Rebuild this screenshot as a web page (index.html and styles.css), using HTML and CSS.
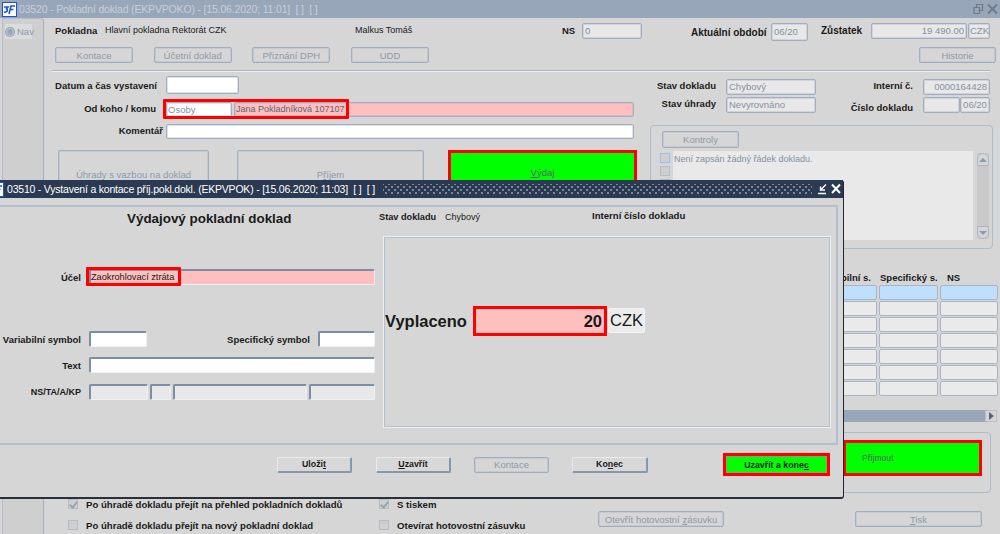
FILE: index.html
```html
<!DOCTYPE html>
<html lang="cs">
<head>
<meta charset="utf-8">
<title>Pokladní doklad</title>
<link rel="stylesheet" href="styles.css">
</head>
<body>
<div class="desktop">

  <section class="window">
    <header class="titlebar">
      <svg class="logo" viewBox="0 0 15 15"><rect x=".5" y=".5" width="14" height="14" fill="#fff" stroke="#1c50d8"/><path d="M7 12 9 4H13M8.2 7.5H11.5M2 5H6L4 7.5M2 10.5 5 9.5 5.5 7" fill="none" stroke="#1c50d8" stroke-width="1.6"/></svg>
      <span class="titletext">03520 - Pokladní doklad (EKPVPOKO) - [15.06.2020; 11:01]&nbsp; [ ]&nbsp; [ ]</span>
      <svg class="winbtns" viewBox="0 0 25 12"><path d="M1 4.5H6.5V10.5H1ZM3.5 4.5V1.5H9.5V7.5H6.5" fill="none" stroke="#6e7a8a" stroke-width="1.2"/><path d="M15 1.5 24 10.5M24 1.5 15 10.5" stroke="#6e7a8a" stroke-width="1.8"/></svg>
    </header>
    <div class="winbody">
      <nav class="nav"><div class="navtab"><span class="radio"></span><span>Nav</span></div></nav>
      <div class="canvas">

        <div class="headrow">
          <b class="pokladna">Pokladna</b>
          <span class="hlavni">Hlavní pokladna Rektorát CZK</span>
          <span class="malkus">Malkus Tomáš</span>
          <b class="nslabel">NS</b>
          <span class="field off nsfield">0</span>
          <b class="obdobilabel">Aktuální období</b>
          <span class="field off obdobi">06/20</span>
          <b class="zustateklabel">Zůstatek</b>
          <span class="field off zustatek">19 490.00</span>
          <span class="field off mena">CZK</span>
        </div>

        <div class="btnrow">
          <button class="btn off w78">Kontace</button>
          <button class="btn off w78">Účetní doklad</button>
          <button class="btn off w78">Přiznání DPH</button>
          <button class="btn off w78">UDD</button>
          <button class="btn off historie">Historie</button>
        </div>

        <div class="rule"></div>

        <div class="mainarea">
          <div class="leftcol">
            <div class="frow datumrow">
              <b class="lab labdatum">Datum a čas vystavení</b>
              <span class="field white datum"></span>
            </div>
            <div class="frow odkohorow">
              <b class="lab labodkoho">Od koho / komu</b>
              <span class="field white osoby">Osoby</span>
              <span class="field pink jana">Jana Pokladníková 107107</span>
              <span class="hl hlodkoho"></span>
            </div>
            <div class="frow komentarrow">
              <b class="lab labkomentar">Komentář</b>
              <span class="field white komentar"></span>
            </div>
            <div class="bigrow">
              <button class="btn off big uhrady">Úhrady s vazbou na doklad</button>
              <button class="btn off big prijem">P<u>ř</u>íjem</button>
              <button class="big vydaj"><u>V</u>ýdaj</button>
            </div>
          </div>

          <div class="rightcol">
            <div class="statrow statrow1">
              <b class="lab labstav">Stav dokladu</b>
              <span class="field off stav">Chybový</span>
              <b class="lab labinterni">Interní č.</b>
              <span class="field off interni">0000164428</span>
            </div>
            <div class="statrow statrow2">
              <b class="lab labstav">Stav úhrady</b>
              <span class="field off stav">Nevyrovnáno</span>
              <b class="lab labinterni labcislo">Číslo dokladu</b>
              <span class="field off cislo1"></span>
              <span class="field off cislo2">06/20</span>
            </div>

            <div class="panel kontroly">
              <button class="btn off kontrolybtn">Kontroly</button>
              <div class="listrow">
                <div class="checks">
                  <span class="sq focus"></span>
                  <span class="sq"></span>
                  <span class="sq"></span>
                </div>
                <div class="listtext">Není zapsán žádný řádek dokladu.</div>
                <div class="vscroll">
                  <span class="arrow up"></span>
                  <span class="arrow down"></span>
                </div>
              </div>
            </div>

            <div class="tablegrid">
              <b class="th thvar">Variabilní s.</b><b class="th thspec">Specifický s.</b><b class="th thns">NS</b>
              <span class="cell sel"></span><span class="cell sel"></span><span class="cell sel"></span>
              <span class="cell"></span><span class="cell"></span><span class="cell"></span>
              <span class="cell"></span><span class="cell"></span><span class="cell"></span>
              <span class="cell"></span><span class="cell"></span><span class="cell"></span>
              <span class="cell"></span><span class="cell"></span><span class="cell"></span>
              <span class="cell"></span><span class="cell"></span><span class="cell"></span>
              <span class="cell"></span><span class="cell"></span><span class="cell"></span>
            </div>
            <div class="hscroll"><span class="arrow right"></span></div>

            <div class="panel prijmoutpanel">
              <button class="prijmout">Přijmout</button>
            </div>
          </div>
        </div>

        <footer class="footer">
          <div class="checkcol col1">
            <label class="chk"><span class="sq tick"></span><b>Po úhradě dokladu přejít na přehled pokladních dokladů</b></label>
            <label class="chk"><span class="sq"></span><b>Po úhradě dokladu přejít na nový pokladní doklad</b></label>
          </div>
          <div class="checkcol col2">
            <label class="chk"><span class="sq tick"></span><b>S tiskem</b></label>
            <label class="chk"><span class="sq"></span><b>Otevírat hotovostní zásuvku</b></label>
          </div>
          <button class="btn off zasuvka">Otevřít hotovostní <u>z</u>ásuvku</button>
          <button class="btn off tisk"><u>T</u>isk</button>
        </footer>
      </div>
    </div>
  </section>

  <section class="dialog">
    <header class="dlgtitle">
      <svg class="dlglogo" viewBox="0 0 15 15"><rect x=".5" y=".5" width="14" height="14" fill="#fff" stroke="#1c50d8"/><path d="M7 12 9 4H13M8.2 7.5H11.5" fill="none" stroke="#1c50d8" stroke-width="1.6"/></svg>
      <span class="dlgtext">03510 - Vystavení a kontace příj.pokl.dokl. (EKPVPOK) - [15.06.2020; 11:03]&nbsp; [ ]&nbsp; [ ]</span>
      <span class="dots"></span>
      <svg class="dlgbtns" viewBox="0 0 24 12"><path d="M1 10.5H9M9 1.5 4 6.5M3.5 3.5V7H8" fill="none" stroke="#fff" stroke-width="1.4"/><path d="M15 1.5 23 10M23 1.5 15 10" stroke="#fff" stroke-width="2"/></svg>
    </header>
    <div class="dlginner">
      <div class="dlghead">
        <b class="dlgheading">Výdajový pokladní doklad</b>
        <b class="dlgstav">Stav dokladu</b>
        <span class="dlgchyb">Chybový</span>
        <b class="dlginterni">Interní číslo dokladu</b>
      </div>
      <div class="dlgmain">
        <div class="dlgform">
          <div class="drow ucelrow">
            <b class="dlab">Účel</b>
            <span class="dfield pink ucel">Zaokrohlovací ztráta</span>
            <span class="hl hlucel"></span>
          </div>
          <div class="drow varrow">
            <b class="dlab">Variabilní symbol</b>
            <span class="dfield white var"></span>
            <b class="dlab speclab">Specifický symbol</b>
            <span class="dfield white spec"></span>
          </div>
          <div class="drow textrow">
            <b class="dlab">Text</b>
            <span class="dfield white text"></span>
          </div>
          <div class="drow nsrow">
            <b class="dlab">NS/TA/A/KP</b>
            <span class="dfield gray n1"></span>
            <span class="dfield gray n2"></span>
            <span class="dfield gray n3"></span>
            <span class="dfield gray n4"></span>
          </div>
        </div>
        <div class="amountbox">
          <b class="vyplaceno">Vyplaceno</b>
          <b class="amount">20</b>
          <span class="currency">CZK</span>
        </div>
      </div>
    </div>
    <div class="dlgbuttons">
      <button class="btn on ulozit">Uloži<u>t</u></button>
      <button class="btn on uzavrit"><u>U</u>zavřít</button>
      <button class="btn off dkontace">Kontace</button>
      <button class="btn on konec">Ko<u>n</u>ec</button>
      <button class="uzavritkonec">Uzavřít a kone<u>c</u></button>
    </div>
  </section>

</div>
</body>
</html>
```
FILE: styles.css
```css
* { box-sizing: border-box; }
html, body { margin: 0; height: 100%; overflow: hidden; }
body { font-family: "Liberation Sans", Arial, sans-serif; font-size: 9px; color: #1a1a1a; background: #d6d6d6; }
b { font-weight: 700; }
button { font: inherit; margin: 0; padding: 0; cursor: default; }

.desktop { position: relative; width: 1000px; height: 534px; overflow: hidden; }

/* background window */
.window { width: 1000px; height: 534px; display: flex; flex-direction: column; background: #d6d6d6; }
.titlebar { height: 18px; flex: none; display: flex; align-items: center; background: #98a6b9; padding: 0 2px; }
.logo { width: 15px; height: 15px; flex: none; }
.titletext { margin-left: 2px; font-size: 10.5px; letter-spacing: -.17px; color: #c8cfd9; white-space: pre; }
.winbtns { width: 25px; height: 12px; margin-left: auto; }
.winbody { flex: 1; display: flex; min-height: 0; }
.nav { flex: none; margin-left: 2px; width: 42px; background: #cfcfcf; border-left: 1px solid #b4bdc9; border-right: 1px solid #a3afc0; border-top: 1px solid #b4bdc9; border-top-right-radius: 3px; padding: 5px 0 0 2px; }
.navtab { width: 27px; height: 15px; background: #dcdcdc; display: flex; align-items: center; gap: 3px; color: #8d99a9; font-size: 9.5px; }
.radio { width: 8px; height: 8px; border-radius: 50%; background: #9ba7b5; border: 1px solid #c2c9d2; flex: none; box-shadow: 0 0 0 1px #9ba7b5; margin-left: 1px; }
.canvas { flex: 1; display: flex; flex-direction: column; min-width: 0; }

/* fields */
.field { display: block; flex: none; height: 16px; line-height: 13px; padding: 0 2px; font-size: 9.5px; white-space: nowrap; overflow: hidden; border-style: solid; border-width: 1px; border-color: #a2aebf; border-radius: 2px; box-shadow: inset 0 0 0 1px rgba(162,174,191,.35); }
.field.off { background: #e8e8e8; color: #8591a2; }
.field.white { background: #fff; color: #8591a2; }
.field.pink { background: #ffbfbf; color: #5b6474; font-size: 9px; }
.lab { display: block; flex: none; text-align: right; line-height: 13px; white-space: nowrap; font-size: 9.5px; }

/* buttons */
.btn { display: block; flex: none; height: 16px; background: #d6d6d6; border: 1px solid #a2aebf; border-radius: 2px; box-shadow: inset 0 0 0 1px rgba(162,174,191,.3); font-size: 9.5px; line-height: 13px; white-space: nowrap; }
.btn.off { color: #8d99a9; }
.btn.on { color: #1a1a1a; font-weight: 700; font-size: 8.8px; border-color: #e8eaee #8796ab #8796ab #e8eaee; border-width: 1px 2px 2px 1px; box-shadow: none; background: #d8d8d8; }

/* header */
.headrow { display: flex; align-items: flex-start; height: 18px; margin-top: 5px; padding-left: 11px; line-height: 15px; }
.pokladna { width: 50px; font-size: 9.5px; }
.hlavni { width: 250px; }
.malkus { width: 207px; }
.nslabel { width: 20px; font-size: 9.5px; }
.nsfield { width: 60px; }
.obdobilabel { width: 80px; margin-left: 49px; font-size: 10px; padding-top: 2px; white-space: nowrap; }
.obdobi { width: 37px; height: 18px; line-height: 15px; }
.zustateklabel { width: 50px; margin-left: 13px; font-size: 10px; }
.zustatek { width: 96px; text-align: right; }
.mena { width: 22px; margin-left: 1px; padding: 0 1px; text-align: center; }

.btnrow { display: flex; gap: 20.67px; height: 16px; margin-top: 6px; padding: 0 4px 0 11px; }
.w78 { width: 78px; }
.historie { width: 77px; margin-left: auto; }
.rule { height: 2px; margin: 7px 10px 0 8px; background: #f0f0f0; border-top: 1px solid #a9b3c1; flex: none; }

/* main */
.mainarea { display: flex; height: 425px; flex: none; }
.leftcol { width: 606px; flex: none; }
.rightcol { width: 350px; flex: none; }
.frow { position: relative; display: flex; align-items: flex-start; }
.datumrow { margin-top: 4px; }
.labdatum { width: 113px; margin-top: 3px; margin-right: 9px; }
.datum { width: 73px; height: 18px; }
.odkohorow { margin-top: 8px; }
.labodkoho { width: 112px; margin-right: 10px; }
.osoby { width: 66px; height: 15px; margin-right: 2px; padding-left: 1px; }
.jana { width: 400px; height: 15px; padding-left: 1px; }
.hl { position: absolute; border: 3px solid #ff0000; border-radius: 1px; pointer-events: none; }
.hlodkoho { left: 119px; top: -3px; width: 186px; height: 20px; }
.komentarrow { margin-top: 7px; }
.labkomentar { width: 119px; margin-right: 3px; }
.komentar { width: 468px; height: 15px; }
.bigrow { display: flex; margin-top: 11px; padding-left: 14px; align-items: flex-start; }
.big { height: 34px; padding-top: 14px; }
.uhrady { width: 151px; }
.prijem { width: 187px; margin-left: 28px; }
.vydaj { width: 189px; height: 34px; margin-left: 24px; background: #00ff00; border: 3px solid #ff0000; color: #55646a; font-size: 9.5px; padding-top: 11px; }

/* right column */
.statrow { display: flex; align-items: flex-start; }
.statrow1 { margin-top: 7px; }
.statrow2 { margin-top: 2px; }
.labstav { width: 66px; margin-right: 10px; }
.stav { width: 90px; }
.labinterni { width: 97px; margin-right: 10px; }
.labcislo { margin-top: 4px; }
.interni { width: 67px; text-align: right; }
.cislo1 { width: 37px; }
.cislo2 { width: 30px; margin-left: 0; text-align: center; padding: 0; }

.panel { border: 1px solid #b0bbca; border-radius: 4px; }
.kontroly { width: 343px; height: 124px; margin-top: 11px; padding: 5px 0 0 11px; }
.kontrolybtn { width: 77px; height: 17px; }
.listrow { display: flex; margin-top: 3px; margin-left: -2px; align-items: flex-start; }
.checks { width: 13px; flex: none; display: flex; flex-direction: column; gap: 3px; padding-top: 2px; }
.sq { display: block; flex: none; width: 10px; height: 10px; background: #cfcfcf; border: 1px solid #b3bcc9; }
.sq.focus { box-shadow: 0 0 0 1px #bcd9f5; }
.listtext { width: 300px; height: 89px; flex: none; background: #e9e9e9; color: #8591a2; padding: 2px 1px; line-height: 12px; font-size: 9px; }
.vscroll { width: 12px; height: 86px; margin: 2px 0 0 4px; background: #c9c9c9; flex: none; display: flex; flex-direction: column; justify-content: space-between; }
.arrow { display: flex; align-items: center; justify-content: center; width: 12px; height: 13px; background: #d6d6d6; border: 1px solid #a9b5c5; }
.arrow::before { content: ""; border-left: 4px solid transparent; border-right: 4px solid transparent; }
.arrow.up { border-radius: 6px 6px 0 0; }
.arrow.up::before { border-bottom: 4px solid #8c9bb0; }
.arrow.down { border-radius: 0 0 6px 6px; }
.arrow.down::before { border-top: 4px solid #8c9bb0; }
.arrow.right { height: 12px; margin-left: auto; background: #d6d6d6; border-color: #b5bfcc; }
.arrow.right::before { border-top: 4px solid transparent; border-bottom: 4px solid transparent; border-left: 5px solid #5a6678; border-right: 0; }

.tablegrid { display: grid; grid-template-columns: 59px 59px 58px; grid-template-rows: 13px; grid-auto-rows: 15px; column-gap: 2px; row-gap: 1px; margin: 22px 0 0 168px; }
.th { height: 13px; line-height: 13px; white-space: nowrap; font-size: 9.5px; align-self: start; }
.thvar { text-align: right; padding-right: 6px; }
.thspec { padding-left: 1px; }
.thns { padding-left: 7px; }
.cell { background: #eaeaea; border: 1px solid #a9b5c5; border-radius: 2px; }
.cell.sel { background: #bfdfff; }
.hscroll { display: flex; width: 179px; height: 12px; margin: 14px 0 0 168px; background: #98a6b9; }
.prijmoutpanel { width: 341px; height: 61px; margin-top: 10px; padding: 7px 0 0 192px; }
.prijmout { display: block; width: 139px; height: 36px; background: #00ff00; border: 3px solid #ff0000; text-align: left; padding-left: 16px; color: #56645f; font-size: 8.6px; }

/* footer */
.footer { flex: 1; display: flex; align-items: flex-start; padding-left: 24px; }
.checkcol { flex: none; display: flex; flex-direction: column; gap: 11px; padding-top: 2px; }
.col1 { width: 311px; }
.col2 { width: 219px; }
.chk { display: flex; align-items: center; height: 10px; gap: 8px; white-space: nowrap; font-size: 9.6px; }
.sq.tick { position: relative; }
.sq.tick::after { content: ""; position: absolute; left: 2px; top: 0; width: 3px; height: 6px; border: solid #98a4b4; border-width: 0 2px 2px 0; transform: rotate(40deg); }
.zasuvka { width: 126px; margin-top: 14px; }
.tisk { width: 127px; margin: 14px 0 0 131px; }

/* dialog window */
.dialog { position: absolute; left: -10px; top: 180px; width: 854px; height: 319px; background: #d6d6d6; border-right: 1px solid #1f2630; border-bottom: 2px solid #2a2f38; border-top-right-radius: 3px; border-bottom-right-radius: 3px; display: flex; flex-direction: column; }
.dlgtitle { height: 18px; flex: none; display: flex; align-items: center; background: #2a3a52; }
.dlglogo { width: 15px; height: 15px; flex: none; margin-left: -1px; }
.dlgtext { margin-left: 3px; width: 376px; flex: none; color: #fff; font-size: 10.5px; letter-spacing: -.21px; white-space: pre; }
.dots { flex: none; width: 429px; height: 10px; background-color: #2a3a52; background-image: radial-gradient(circle, #7c8797 0.8px, transparent 1.2px), radial-gradient(circle, #7c8797 0.8px, transparent 1.2px); background-size: 6px 6px, 6px 6px; background-position: 0 0, 3px 3px; }
.dlgbtns { width: 24px; height: 12px; margin-left: 5px; flex: none; }

.dlginner { height: 240px; flex: none; margin: 7px 5px 0 0; border-top: 2px solid #b4bfcd; border-right: 2px solid #b4bfcd; border-bottom: 2px solid #b4bfcd; display: flex; flex-direction: column; }
.dlghead { height: 29px; flex: none; display: flex; align-items: flex-start; }
.dlgheading { width: 252px; margin-left: 137px; padding-top: 4px; font-size: 13.4px; line-height: 16px; white-space: nowrap; }
.dlgstav { width: 66px; padding-top: 4px; line-height: 13px; white-space: nowrap; font-size: 9.2px; }
.dlgchyb { width: 147px; padding-top: 4px; line-height: 13px; }
.dlginterni { padding-top: 2px; line-height: 13px; white-space: nowrap; font-size: 9.6px; }
.dlgmain { display: flex; flex: none; }
.dlgform { width: 393px; flex: none; }
.drow { position: relative; display: flex; align-items: center; height: 16px; }
.ucelrow { margin-top: 33px; }
.varrow { margin-top: 46px; }
.textrow { margin-top: 10px; }
.nsrow { margin-top: 11px; gap: 2px; }
.dlab { width: 91px; flex: none; margin-right: 8px; text-align: right; white-space: nowrap; font-size: 9.5px; }
.nsrow .dlab { margin-right: 6px; font-size: 9px; }
.dfield { display: block; flex: none; height: 16px; line-height: 13px; font-size: 9.2px; padding: 0 2px 0 0; border-style: solid; border-width: 2px 1px 1px 2px; border-color: #7e8da5 #eef0f3 #eef0f3 #7e8da5; border-radius: 2px; white-space: nowrap; color: #1a1a1a; }
.dfield.white { background: #fff; }
.dfield.gray { background: #e8e8e8; }
.dfield.pink { background: #ffbfbf; }
.ucel { width: 286px; }
.hlucel { left: 96px; top: -2px; width: 95px; height: 19px; }
.var { width: 58px; }
.speclab { width: 163px; }
.spec { width: 57px; }
.text { width: 286px; }
.n1 { width: 59px; }
.n2 { width: 21px; }
.n3 { width: 134px; }
.n4 { width: 66px; }
.amountbox { width: 448px; height: 192px; flex: none; display: flex; align-items: flex-start; border: 1px solid #eef0f3; outline: 1px solid #b4bfcd; outline-offset: -2px; padding: 69px 0 0 1px; }
.vyplaceno { width: 88px; flex: none; font-size: 16.5px; line-height: 30px; white-space: nowrap; }
.amount { width: 134px; height: 30px; flex: none; background: #ffbfbf; border: 3px solid #ff0000; font-size: 16.5px; line-height: 24px; text-align: right; padding-right: 2px; }
.currency { width: 37px; height: 25px; flex: none; margin: 2px 0 0 1px; background: #ececec; border: 1px solid #f4f4f4; border-radius: 2px; font-size: 16.5px; line-height: 23px; text-align: center; }
.dlgbuttons { display: flex; align-items: center; height: 23px; margin-top: 8px; flex: none; }
.ulozit { width: 75px; margin-left: 287px; }
.uzavrit { width: 75px; margin-left: 24px; }
.dkontace { width: 75px; margin-left: 23px; }
.konec { width: 76px; margin-left: 23px; }
.uzavritkonec { width: 107px; height: 23px; margin-left: 75px; background: #00ff00; border: 3px solid #ff0000; box-shadow: inset 0 0 0 1px #8a9a8a; font-weight: 700; font-size: 8.8px; color: #1a1a1a; }
```
